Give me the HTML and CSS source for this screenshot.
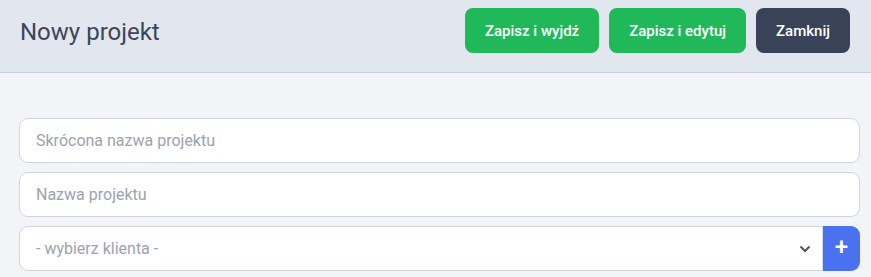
FILE: index.html
```html
<!DOCTYPE html>
<html lang="pl">
<head>
    <meta charset="UTF-8">
    <meta name="viewport" content="width=device-width, initial-scale=1.0">
    <title>Nowy projekt</title>
    <link rel="stylesheet" href="styles.css">
</head>
<body>

<div class="topbar">
    <h1 class="title">Nowy projekt</h1>
    <div class="actions">
        <button class="btn btn-green">Zapisz i wyjdź</button>
        <button class="btn btn-green">Zapisz i edytuj</button>
        <button class="btn btn-dark">Zamknij</button>
    </div>
</div>

<form class="project-form">
    <input type="text" class="field" placeholder="Skrócona nazwa projektu">
    <input type="text" class="field" placeholder="Nazwa projektu">
    <div class="select-group">
        <div class="select-wrap">
            <select class="field select">
                <option>- wybierz klienta -</option>
            </select>
            <svg class="chevron" width="12" height="8" viewBox="0 0 12 8">
                <path d="M1.5 1.5 L6 6 L10.5 1.5" fill="none" stroke="#4b5563" stroke-width="2"/>
            </svg>
        </div>
        <button type="button" class="add-btn">+</button>
    </div>
</form>

</body>
</html>
```

FILE: styles.css
```css
body {
    margin: 0;
    font-family: Roboto, "Liberation Sans", sans-serif;
    background-color: #f3f4f8;
    width: 871px;
    height: 277px;
    overflow: hidden;
}
.topbar {
    height: 73px;
    box-sizing: border-box;
    display: flex;
    align-items: flex-start;
    justify-content: space-between;
    padding: 0 21px 0 20px;
    background-color: #e2e7ef;
    border-bottom: 1px solid #cbd2de;
}
.title {
    margin: 18px 0 0 0;
    font-size: 24px;
    font-weight: 400;
    color: #3b4659;
}
.actions {
    display: flex;
    gap: 10px;
    margin-top: 8px;
}
.btn {
    height: 45px;
    border: none;
    border-radius: 8px;
    padding: 0 20px;
    font-family: Roboto, "Liberation Sans", sans-serif;
    font-size: 15px;
    font-weight: 500;
    color: #fff;
    cursor: pointer;
}
.btn-green {
    background-color: #21b85a;
}
.btn-dark {
    background-color: #384357;
}
.project-form {
    display: flex;
    flex-direction: column;
    gap: 9px;
    padding: 45px 11px 0 19px;
}
.field {
    height: 45px;
    box-sizing: border-box;
    width: 100%;
    padding: 0 16px;
    border: 1px solid #cfd5df;
    border-radius: 9px;
    background-color: #fff;
    font-family: Roboto, "Liberation Sans", sans-serif;
    font-size: 16px;
    color: #9ba3af;
    outline: none;
}
.field::placeholder {
    color: #9ba3af;
}
.select-group {
    display: flex;
}
.select-wrap {
    flex: 1;
    position: relative;
}
.select {
    appearance: none;
    border-radius: 9px 0 0 9px;
}
.chevron {
    position: absolute;
    right: 12px;
    top: 19px;
}
.add-btn {
    width: 37px;
    height: 45px;
    border: none;
    border-radius: 0 9px 9px 0;
    background-color: #4a72f0;
    color: #fff;
    font-size: 24px;
    font-weight: 500;
    font-family: Roboto, "Liberation Sans", sans-serif;
    padding: 0 0 3px 0;
}
```
